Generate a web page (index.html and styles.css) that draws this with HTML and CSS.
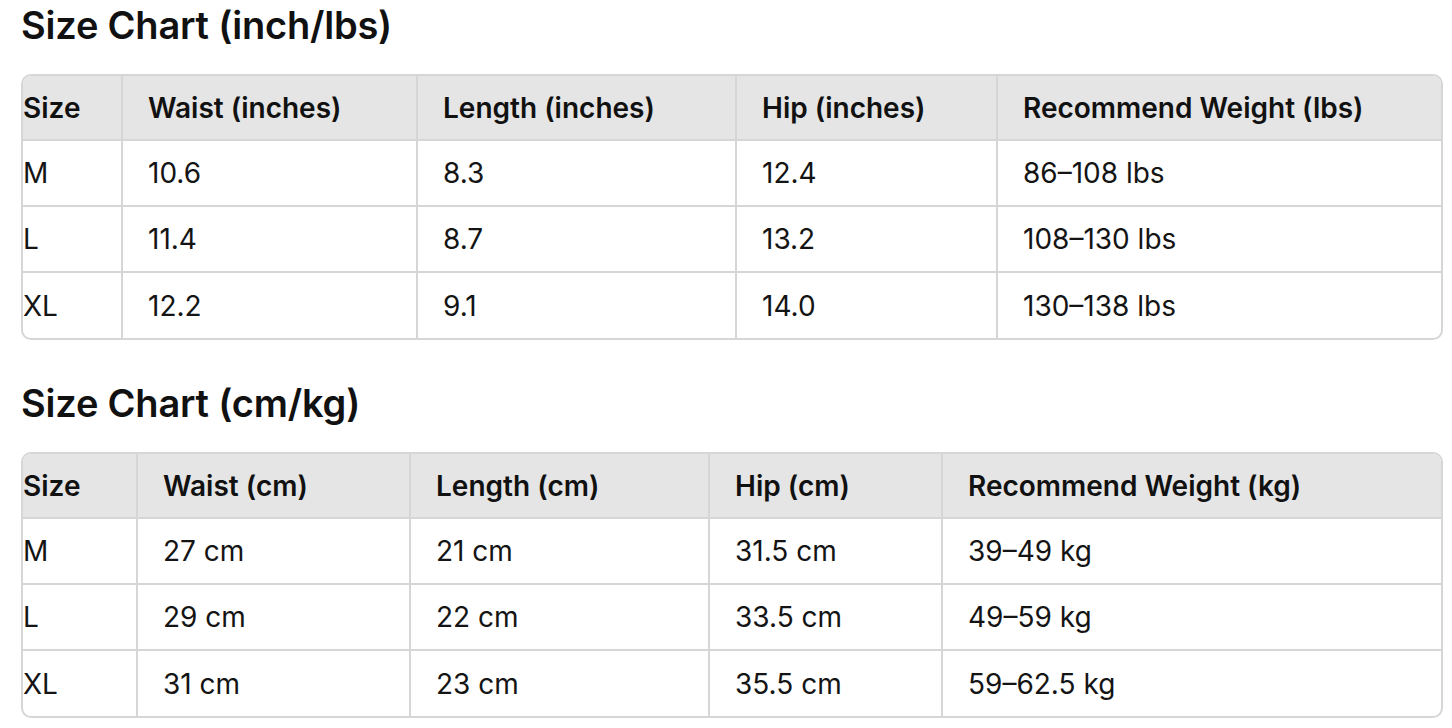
FILE: index.html
```html
<!DOCTYPE html>
<html lang="en">
<head>
<meta charset="utf-8">
<title>Size Chart</title>
<link rel="stylesheet" href="styles.css">
</head>
<body>
<main class="page">
  <section class="chart">
    <h2 class="chart-title">Size Chart (inch/lbs)</h2>
    <div class="table-wrap">
      <table class="size-table">
        <colgroup>
          <col class="c1a"><col class="c2a"><col class="c3a"><col class="c4a"><col class="c5a">
        </colgroup>
        <thead>
          <tr><th>Size</th><th>Waist (inches)</th><th>Length (inches)</th><th>Hip (inches)</th><th>Recommend Weight (lbs)</th></tr>
        </thead>
        <tbody>
          <tr><td>M</td><td>10.6</td><td>8.3</td><td>12.4</td><td>86–108 lbs</td></tr>
          <tr><td>L</td><td>11.4</td><td>8.7</td><td>13.2</td><td>108–130 lbs</td></tr>
          <tr><td>XL</td><td>12.2</td><td>9.1</td><td>14.0</td><td>130–138 lbs</td></tr>
        </tbody>
      </table>
    </div>
  </section>
  <section class="chart">
    <h2 class="chart-title">Size Chart (cm/kg)</h2>
    <div class="table-wrap">
      <table class="size-table">
        <colgroup>
          <col class="c1b"><col class="c2b"><col class="c3b"><col class="c4b"><col class="c5b">
        </colgroup>
        <thead>
          <tr><th>Size</th><th>Waist (cm)</th><th>Length (cm)</th><th>Hip (cm)</th><th>Recommend Weight (kg)</th></tr>
        </thead>
        <tbody>
          <tr><td>M</td><td>27 cm</td><td>21 cm</td><td>31.5 cm</td><td>39–49 kg</td></tr>
          <tr><td>L</td><td>29 cm</td><td>22 cm</td><td>33.5 cm</td><td>49–59 kg</td></tr>
          <tr><td>XL</td><td>31 cm</td><td>23 cm</td><td>35.5 cm</td><td>59–62.5 kg</td></tr>
        </tbody>
      </table>
    </div>
  </section>
</main>
</body>
</html>
```

FILE: styles.css
```css
* { box-sizing: border-box; }

html, body {
  margin: 0;
  padding: 0;
  background: #ffffff;
}

body {
  font-family: Inter, "Liberation Sans", Arial, sans-serif;
  color: #111111;
}

.page {
  padding: 2px 9px 0 21px;
  display: flex;
  flex-direction: column;
  gap: 40px;
}

.chart {
  display: flex;
  flex-direction: column;
}

.chart-title {
  margin: 0 0 26px 0;
  font-size: 38px;
  line-height: 46px;
  font-weight: 600;
  letter-spacing: -0.2px;
  color: #111111;
}

.table-wrap {
  border: 2px solid #d6d6d6;
  border-radius: 10px;
  overflow: hidden;
}

.size-table {
  width: 100%;
  border-collapse: collapse;
  table-layout: fixed;
  font-size: 28px;
}

.size-table th,
.size-table td {
  height: 66px;
  padding: 0 0 0 25px;
  text-align: left;
  vertical-align: middle;
  border-left: 2px solid #d6d6d6;
  border-top: 2px solid #d6d6d6;
  white-space: nowrap;
}

.size-table th:first-child,
.size-table td:first-child {
  border-left: none;
  padding-left: 0;
}

.size-table thead th {
  height: 64px;
  border-top: none;
  background: #e5e5e5;
  font-weight: 600;
  color: #111111;
}

.size-table td {
  font-weight: 400;
  color: #141414;
}

.c1a { width: 99px; }
.c2a { width: 295px; }
.c3a { width: 319px; }
.c4a { width: 261px; }
.c5a { width: auto; }

.c1b { width: 114px; }
.c2b { width: 273px; }
.c3b { width: 299px; }
.c4b { width: 233px; }
.c5b { width: auto; }
```
